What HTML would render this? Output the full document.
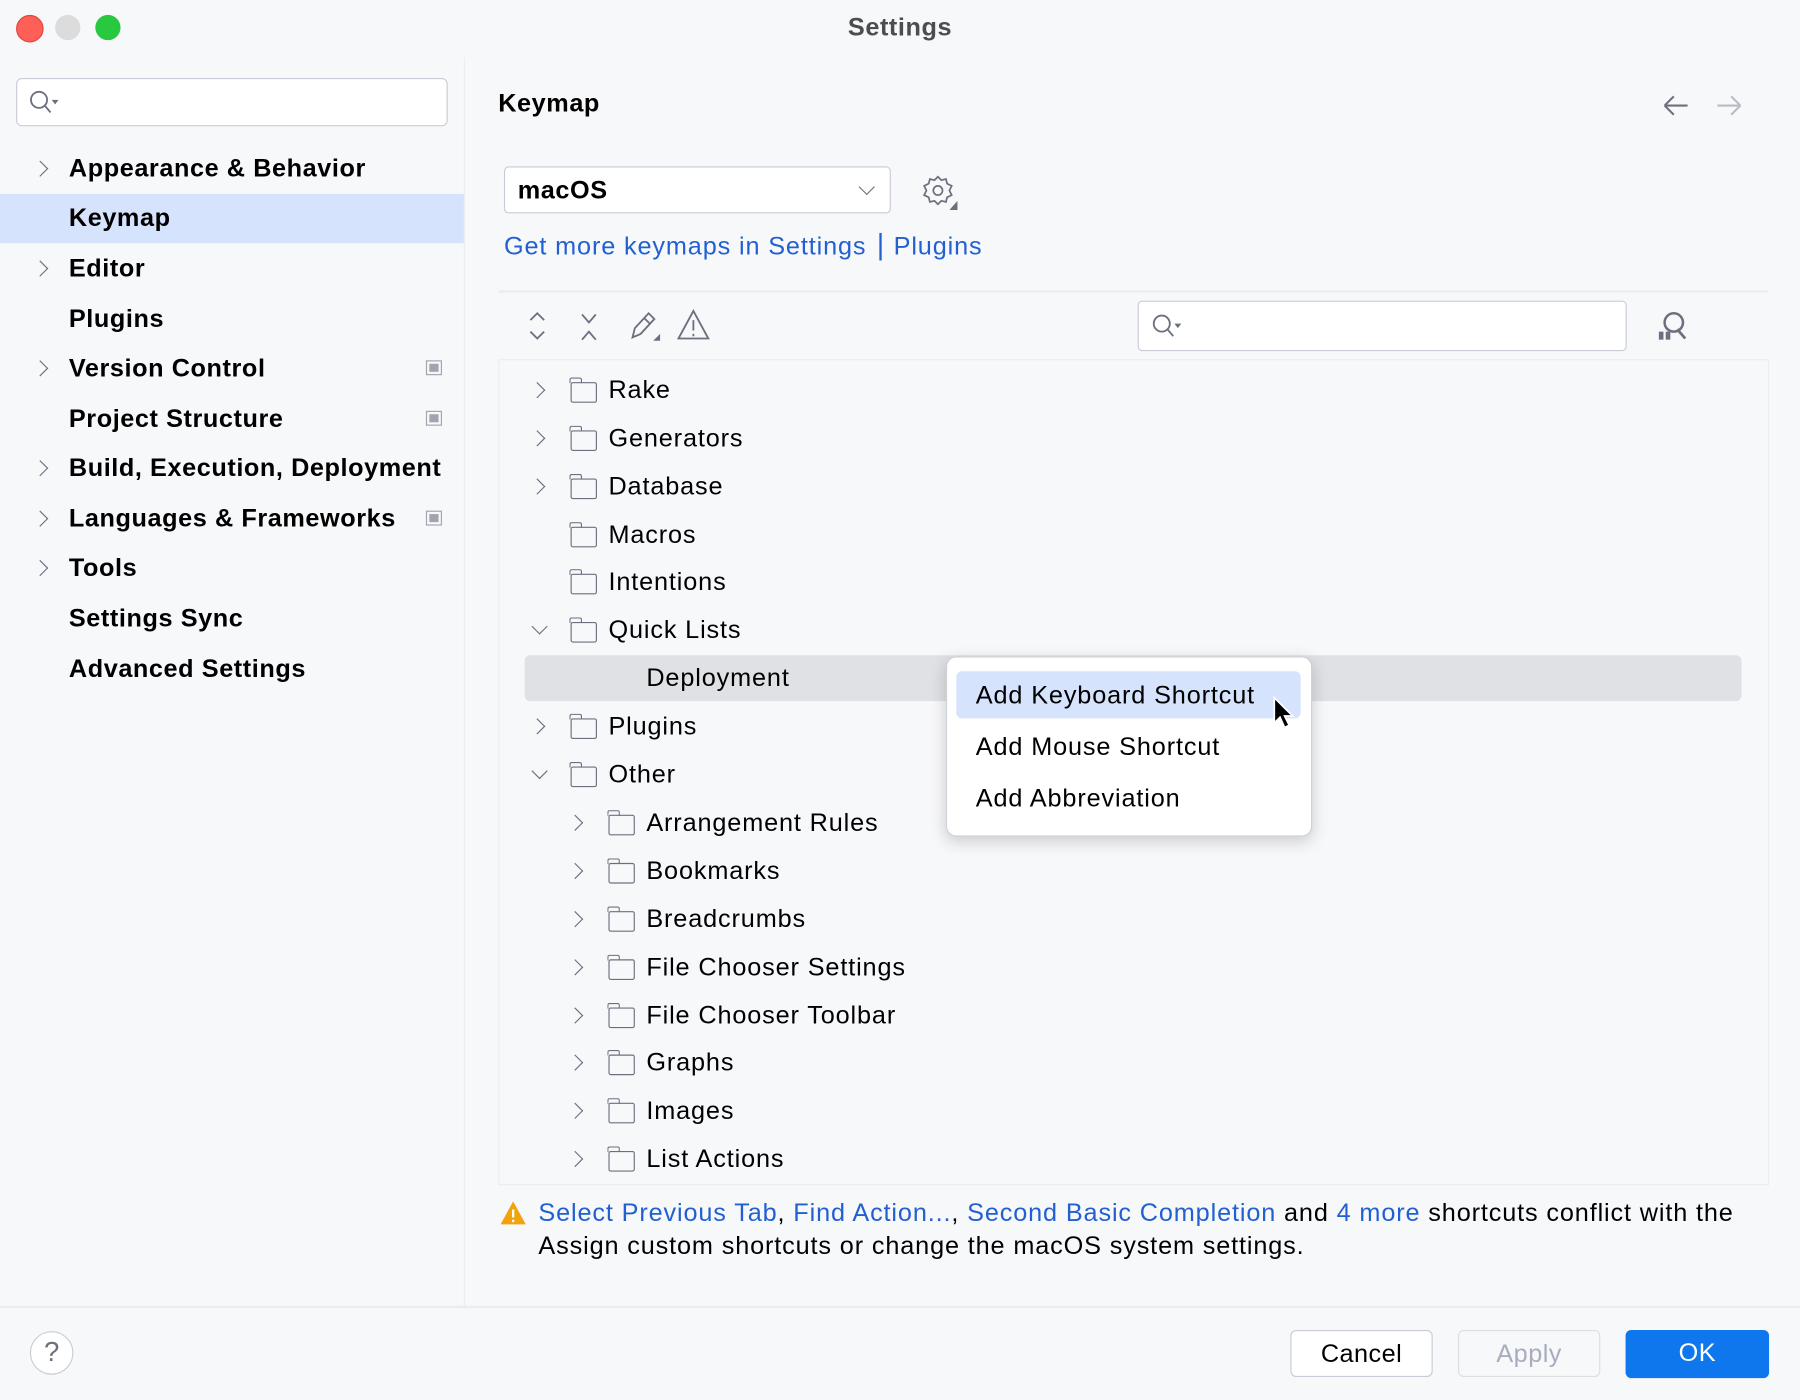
<!DOCTYPE html>
<html><head><meta charset="utf-8"><style>
html,body{margin:0;padding:0;width:1800px;height:1400px;overflow:hidden;background:#f7f8fa;}
#w{position:absolute;left:0;top:0;width:1568px;height:1220px;transform:scale(1.148,1.1475);transform-origin:0 0;background:#f7f8fa;font-family:"Liberation Sans",sans-serif;color:#000;border-radius:12px;overflow:hidden}
.a{position:absolute}
.t{position:absolute;font-size:22px;line-height:26px;white-space:nowrap;letter-spacing:0.75px}
.b{font-weight:bold}
.side .t{font-weight:bold;left:60px;letter-spacing:0.5px}
.chev{position:absolute;width:9px;height:9px;border-right:1.6px solid #6c707e;border-bottom:1.6px solid #6c707e}
.cr{transform:rotate(-45deg)}
.cd{transform:rotate(45deg)}
.fold{position:absolute;width:21px;height:16px;border:1.6px solid #6c707e;border-radius:2px}
.fold:before{content:"";position:absolute;left:-1.6px;top:-5px;width:9px;height:4px;border:1.6px solid #6c707e;border-bottom:none;border-radius:2px 2px 0 0}
.link{color:#2260d2}
.btn{position:absolute;height:39px;border-radius:5px;font-size:22px;line-height:39px;text-align:center;letter-spacing:0.4px}
.mini{position:absolute;width:12px;height:11px;border:1.5px solid #a0a4ad;}
.mini:after{content:"";position:absolute;left:2px;top:2px;width:8px;height:7px;background:#a0a4ad}
</style></head><body><div id="w">
<div class="a" style="left:14px;top:13px;width:22px;height:22px;border-radius:50%;background:#fe5f57;border:0.5px solid #e0443e"></div>
<div class="a" style="left:48px;top:13px;width:22px;height:22px;border-radius:50%;background:#dcdcdc"></div>
<div class="a" style="left:83px;top:13px;width:22px;height:22px;border-radius:50%;background:#28c840"></div>
<div class="t b" style="left:0;width:1568px;text-align:center;top:11px;color:#4d4d4d;letter-spacing:0.5px">Settings</div>
<div class="a" style="left:404px;top:50px;width:1px;height:1088px;background:#ebecf0"></div>
<div class="a" style="left:14px;top:68px;width:374px;height:40px;background:#fff;border:1.5px solid #c9ccd6;border-radius:5px"></div>
<svg class="a" style="left:24px;top:77px" width="32" height="24"><circle cx="10" cy="10" r="7" fill="none" stroke="#6c707e" stroke-width="1.6"/><path d="M15 15l5 6" stroke="#6c707e" stroke-width="1.6"/><path d="M21 10h6l-3 4z" fill="#6c707e"/></svg>
<div class="a" style="left:0;top:169px;width:404px;height:43px;background:#d5e3fc"></div>
<div class="side">
<div class="chev cr" style="left:30px;top:142px"></div><div class="t" style="top:134px">Appearance &amp; Behavior</div>
<div class="t" style="top:177px">Keymap</div>
<div class="chev cr" style="left:30px;top:229px"></div><div class="t" style="top:221px">Editor</div>
<div class="t" style="top:265px">Plugins</div>
<div class="chev cr" style="left:30px;top:316px"></div><div class="t" style="top:308px">Version Control</div>
<div class="t" style="top:352px">Project Structure</div>
<div class="chev cr" style="left:30px;top:403px"></div><div class="t" style="top:395px">Build, Execution, Deployment</div>
<div class="chev cr" style="left:30px;top:447px"></div><div class="t" style="top:439px">Languages &amp; Frameworks</div>
<div class="chev cr" style="left:30px;top:490px"></div><div class="t" style="top:482px">Tools</div>
<div class="t" style="top:526px">Settings Sync</div>
<div class="t" style="top:570px">Advanced Settings</div>
</div>
<div class="mini" style="left:371px;top:314px"></div>
<div class="mini" style="left:371px;top:358px"></div>
<div class="mini" style="left:371px;top:445px"></div>
<div class="t b" style="left:434px;top:77px;letter-spacing:0.5px">Keymap</div>
<svg class="a" style="left:1446px;top:80px" width="72" height="24"><path d="M4 12h20M4 12l8-8M4 12l8 8" fill="none" stroke="#6c707e" stroke-width="1.8"/><path d="M50 12h20M70 12l-8-8M70 12l-8 8" fill="none" stroke="#b8bbc2" stroke-width="1.8"/></svg>
<div class="a" style="left:439px;top:145px;width:335px;height:39px;background:#fff;border:1.5px solid #c9ccd6;border-radius:4px"></div>
<div class="t b" style="left:451px;top:153px;letter-spacing:0.5px">macOS</div>
<div class="chev cd" style="left:750px;top:158px"></div>
<svg class="a" style="left:802px;top:151px" width="34" height="34"><circle cx="15" cy="15" r="4" fill="none" stroke="#6c707e" stroke-width="1.5"/><path d="M15 3l3 3 4-1 1 4 4 2-2 4 2 4-4 2-1 4-4-1-3 3-3-3-4 1-1-4-4-2 2-4-2-4 4-2 1-4 4 1z" fill="none" stroke="#6c707e" stroke-width="1.5"/><path d="M32 24v8h-7z" fill="#6c707e"/></svg>
<div class="t link" style="left:439px;top:202px">Get more keymaps in Settings <span style="display:inline-block;width:2px;height:24px;background:#2260d2;vertical-align:-5px;margin:0 4px"></span> Plugins</div>
<div class="a" style="left:434px;top:253px;width:1106px;height:1.5px;background:#ebecf0"></div>
<svg class="a" style="left:455px;top:268px" width="170" height="32" fill="none" stroke="#6c707e" stroke-width="1.6">
<path d="M7 11l6-6 6 6M7 21l6 6 6-6"/>
<path d="M52 6l6 7 6-7M52 28l6-7 6 7"/>
<path d="M96 26l2-8 12-13 5 5-12 13z M106 9l5 5"/><path d="M114 29h6v-6z" fill="#6c707e" stroke="none"/>
<path d="M149 3l13 24h-26z M149 11v9 M149 23v2"/>
</svg>
<div class="a" style="left:991px;top:262px;width:424px;height:42px;background:#fff;border:1.5px solid #c9ccd6;border-radius:4px"></div>
<svg class="a" style="left:1002px;top:272px" width="32" height="24"><circle cx="10" cy="10" r="7" fill="none" stroke="#6c707e" stroke-width="1.6"/><path d="M15 15l5 6" stroke="#6c707e" stroke-width="1.6"/><path d="M21 10h6l-3 4z" fill="#6c707e"/></svg>
<svg class="a" style="left:1442px;top:268px" width="32" height="32"><circle cx="16" cy="13" r="8" fill="none" stroke="#6c707e" stroke-width="2.2"/><path d="M19 19l7 8" stroke="#6c707e" stroke-width="2.4"/><rect x="3" y="21" width="4" height="7" fill="#6c707e"/><rect x="9" y="21" width="4" height="7" fill="#6c707e"/></svg>
<div class="a" style="left:434px;top:313px;width:1105px;height:718px;border:1.5px solid #ebecf0;background:#f7f8fa"></div>
<div class="a" style="left:457px;top:571px;width:1060px;height:40px;background:#dfe1e5;border-radius:5px"></div>
<div class="chev cr" style="left:463px;top:335px"></div><div class="fold" style="left:497px;top:333px"></div><div class="t" style="left:530px;top:327px">Rake</div>
<div class="chev cr" style="left:463px;top:377px"></div><div class="fold" style="left:497px;top:375px"></div><div class="t" style="left:530px;top:369px">Generators</div>
<div class="chev cr" style="left:463px;top:419px"></div><div class="fold" style="left:497px;top:417px"></div><div class="t" style="left:530px;top:411px">Database</div>
<div class="fold" style="left:497px;top:459px"></div><div class="t" style="left:530px;top:453px">Macros</div>
<div class="fold" style="left:497px;top:500px"></div><div class="t" style="left:530px;top:494px">Intentions</div>
<div class="chev cd" style="left:465px;top:541px"></div><div class="fold" style="left:497px;top:542px"></div><div class="t" style="left:530px;top:536px">Quick Lists</div>
<div class="t" style="left:563px;top:578px">Deployment</div>
<div class="chev cr" style="left:463px;top:628px"></div><div class="fold" style="left:497px;top:626px"></div><div class="t" style="left:530px;top:620px">Plugins</div>
<div class="chev cd" style="left:465px;top:667px"></div><div class="fold" style="left:497px;top:668px"></div><div class="t" style="left:530px;top:662px">Other</div>
<div class="chev cr" style="left:496px;top:712px"></div><div class="fold" style="left:530px;top:710px"></div><div class="t" style="left:563px;top:704px">Arrangement Rules</div>
<div class="chev cr" style="left:496px;top:754px"></div><div class="fold" style="left:530px;top:752px"></div><div class="t" style="left:563px;top:746px">Bookmarks</div>
<div class="chev cr" style="left:496px;top:796px"></div><div class="fold" style="left:530px;top:794px"></div><div class="t" style="left:563px;top:788px">Breadcrumbs</div>
<div class="chev cr" style="left:496px;top:838px"></div><div class="fold" style="left:530px;top:836px"></div><div class="t" style="left:563px;top:830px">File Chooser Settings</div>
<div class="chev cr" style="left:496px;top:880px"></div><div class="fold" style="left:530px;top:878px"></div><div class="t" style="left:563px;top:872px">File Chooser Toolbar</div>
<div class="chev cr" style="left:496px;top:921px"></div><div class="fold" style="left:530px;top:919px"></div><div class="t" style="left:563px;top:913px">Graphs</div>
<div class="chev cr" style="left:496px;top:963px"></div><div class="fold" style="left:530px;top:961px"></div><div class="t" style="left:563px;top:955px">Images</div>
<div class="chev cr" style="left:496px;top:1005px"></div><div class="fold" style="left:530px;top:1003px"></div><div class="t" style="left:563px;top:997px">List Actions</div>
<div class="a" style="left:824px;top:572px;width:317px;height:155px;background:#fff;border:1px solid #d0d2d8;border-radius:9px;box-shadow:0 4px 14px rgba(0,0,0,.18)"></div>
<div class="a" style="left:833px;top:585px;width:300px;height:41px;background:#d5e3fc;border-radius:5px"></div>
<div class="t" style="left:850px;top:593px">Add Keyboard Shortcut</div>
<div class="t" style="left:850px;top:638px">Add Mouse Shortcut</div>
<div class="t" style="left:850px;top:683px">Add Abbreviation</div>
<svg class="a" style="left:1108px;top:606px" width="22" height="32"><path d="M2 2v22l5-5 4 9 4-2-4-8h7z" fill="#000" stroke="#fff" stroke-width="1.5"/></svg>
<svg class="a" style="left:435px;top:1045px" width="24" height="24"><path d="M12 2l11 20H1z" fill="#f2a20d"/><path d="M12 9v7M12 18v2" stroke="#fff" stroke-width="2"/></svg>
<div class="t" style="left:469px;top:1044px"><span class="link">Select Previous Tab</span>, <span class="link">Find Action...</span>, <span class="link">Second Basic Completion</span> and <span class="link">4 more</span> shortcuts conflict with the</div>
<div class="t" style="left:469px;top:1073px">Assign custom shortcuts or change the macOS system settings.</div>
<div class="a" style="left:0;top:1138px;width:1568px;height:1.5px;background:#ebecf0"></div>
<div class="a" style="left:26px;top:1160px;width:36px;height:36px;border:1.5px solid #c9ccd6;border-radius:50%;background:#fff;text-align:center;font-size:24px;line-height:36px;color:#6c707e">?</div>
<div class="btn" style="left:1124px;top:1159px;width:122px;background:#fff;border:1.5px solid #c9ccd6">Cancel</div>
<div class="btn" style="left:1270px;top:1159px;width:122px;border:1.5px solid #dcdee3;color:#a8adbd">Apply</div>
<div class="btn" style="left:1416px;top:1159px;width:125px;height:42px;background:#0f77ee;color:#fff">OK</div>
</div></body></html>
